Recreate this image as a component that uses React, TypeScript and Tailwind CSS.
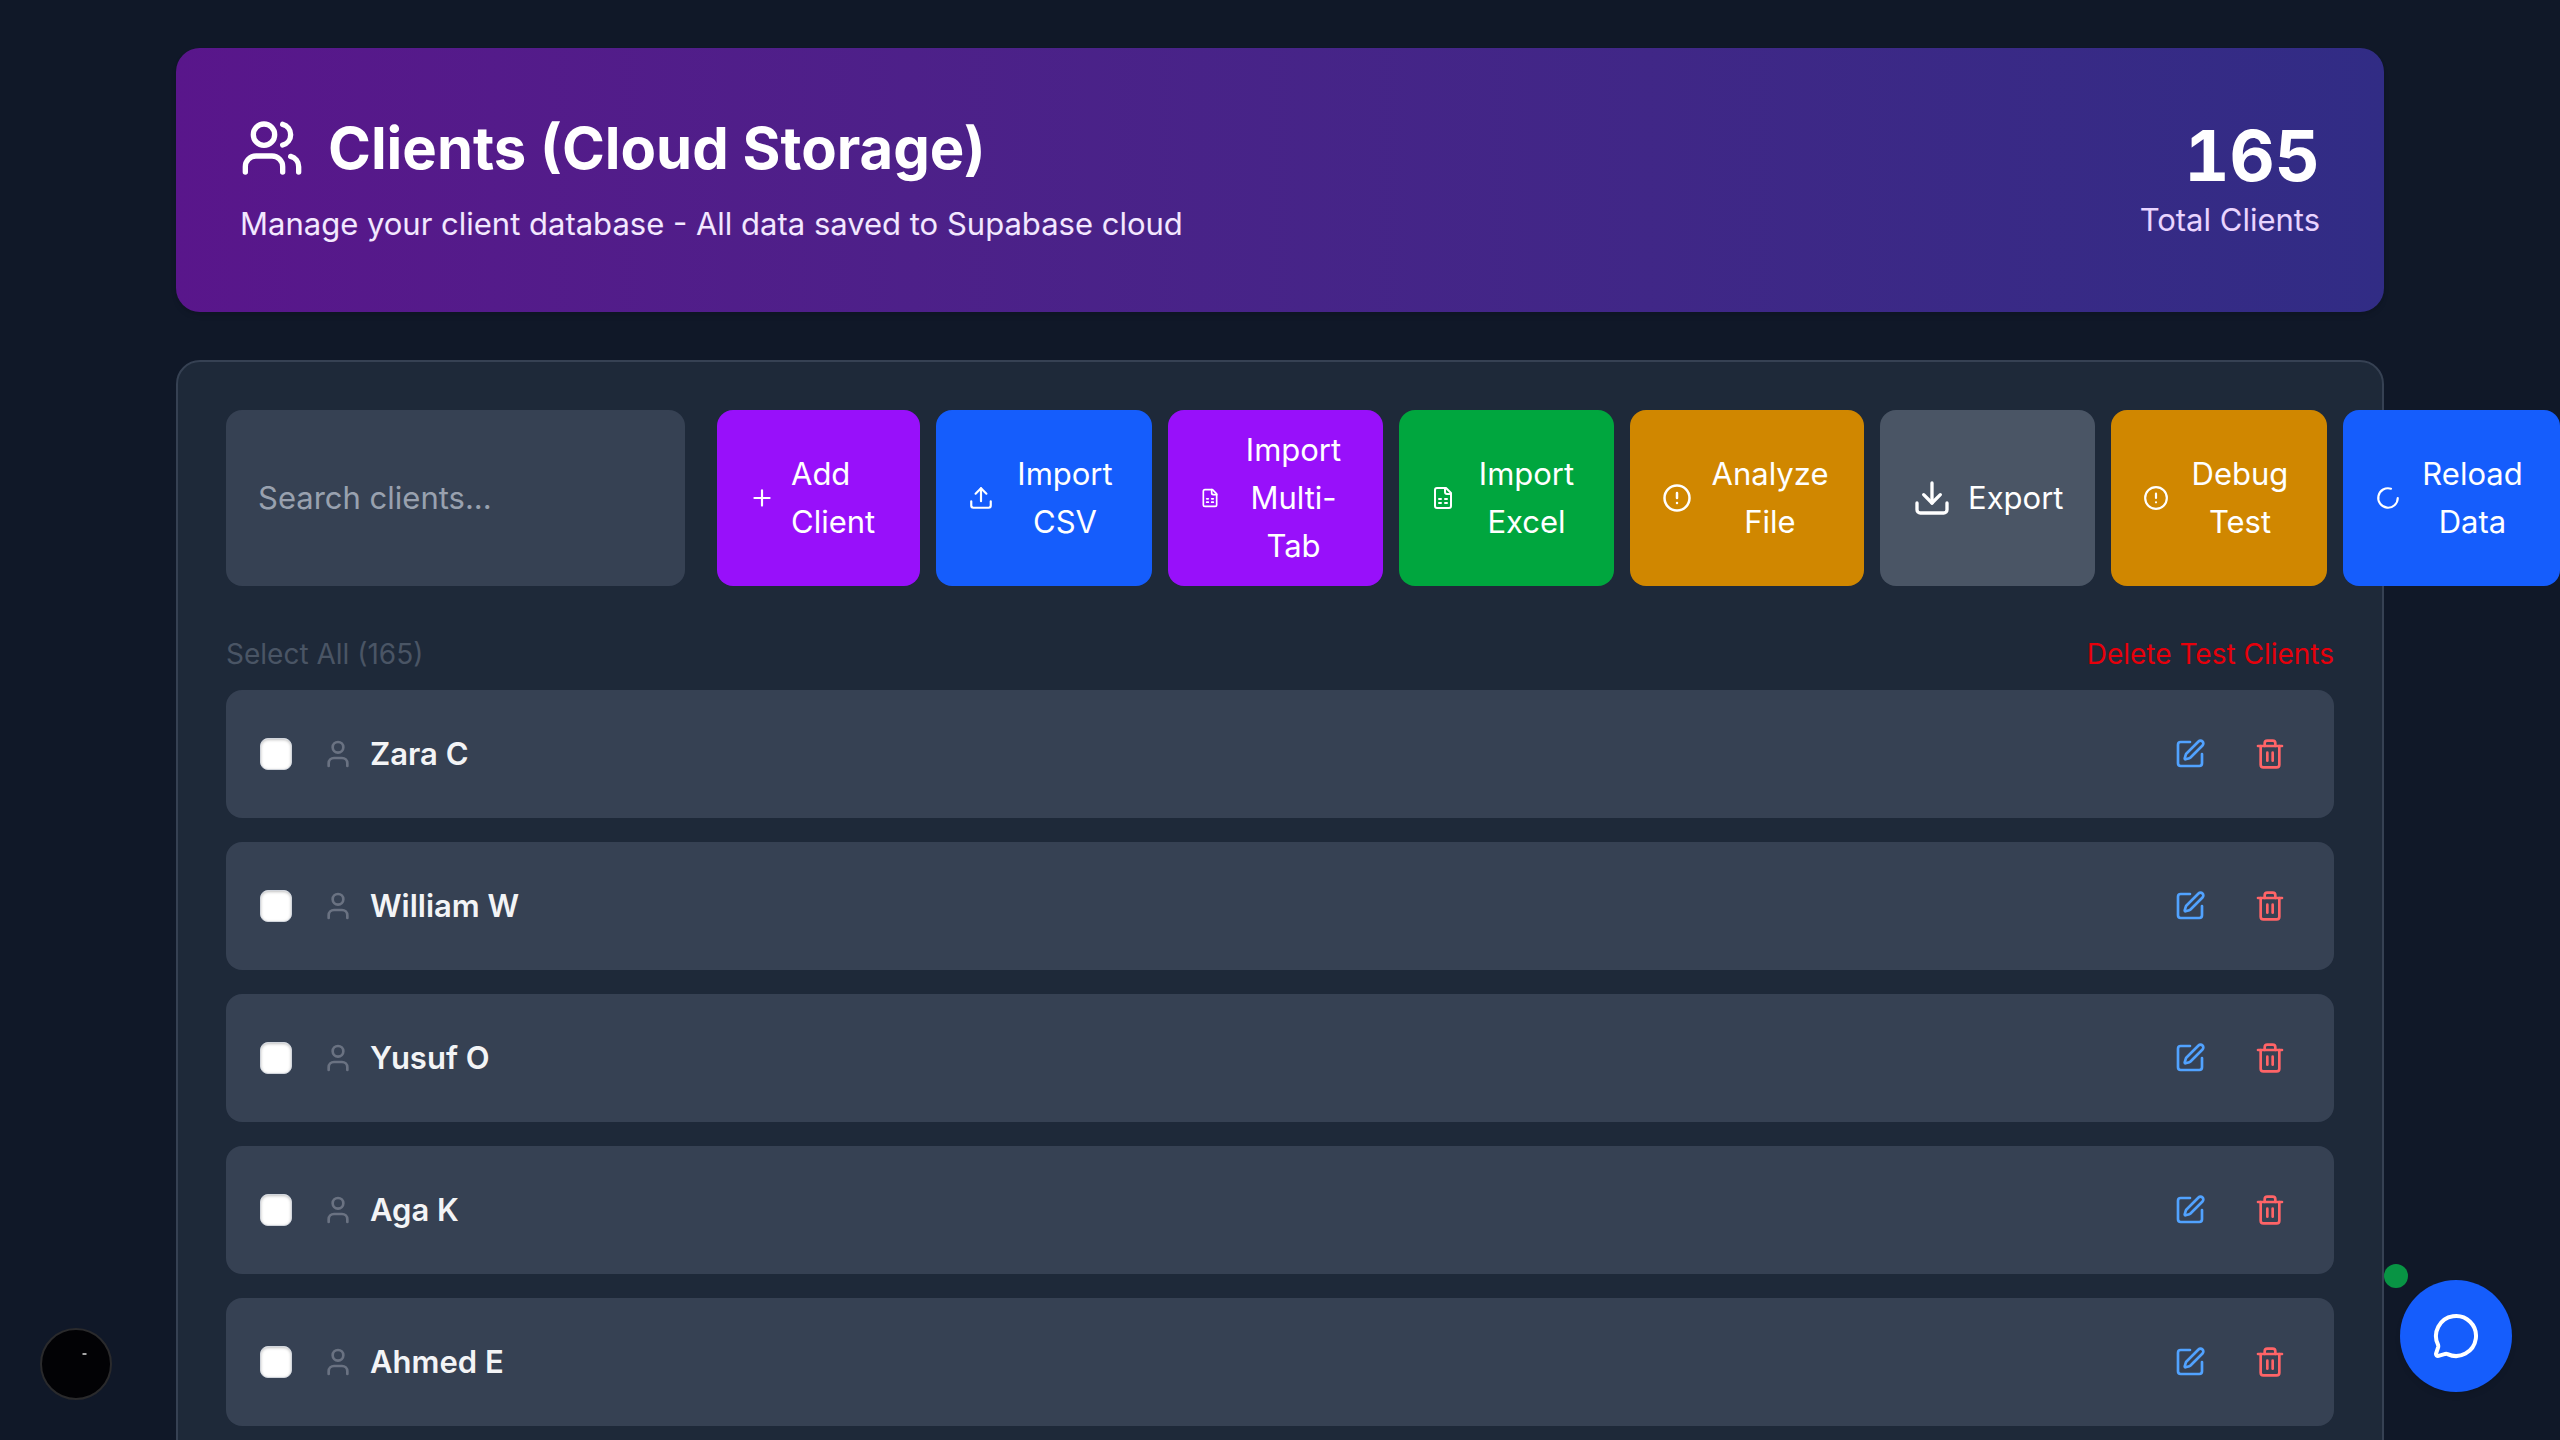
import React from "react";
import {
  CircleAlert,
  Download,
  LoaderCircle,
  MessageCircle,
  Plus,
  SquarePen,
  Trash2,
  Upload,
  User,
  Users,
} from "lucide-react";

type IconProps = { className?: string };

function SheetIcon({ className }: IconProps) {
  return (
    <svg
      viewBox="0 0 24 24"
      fill="none"
      stroke="currentColor"
      strokeWidth="2"
      strokeLinecap="round"
      strokeLinejoin="round"
      className={className}
      aria-hidden="true"
    >
      <path d="M15 2H6a2 2 0 0 0-2 2v16a2 2 0 0 0 2 2h12a2 2 0 0 0 2-2V7Z" />
      <path d="M14 2v4a2 2 0 0 0 2 2h4" />
      <path d="M8 13h2M14 13h2M8 17h2M14 17h2" />
    </svg>
  );
}

type Action = { label: string; icon: React.ComponentType<IconProps>; box: string; iconBox: string };

const actions: Action[] = [
  { label: "Add Client", icon: Plus, box: "w-[203px] bg-[#9810fa] text-left", iconBox: "size-[26px]" },
  { label: "Import CSV", icon: Upload, box: "w-[216px] bg-[#155dfc]", iconBox: "size-[26px]" },
  { label: "Import Multi-Tab", icon: SheetIcon, box: "w-[215px] bg-[#9810fa]", iconBox: "size-5" },
  { label: "Import Excel", icon: SheetIcon, box: "w-[215px] bg-[#00a63e]", iconBox: "size-6" },
  { label: "Analyze File", icon: CircleAlert, box: "w-[234px] bg-[#d08700]", iconBox: "size-[30px]" },
  { label: "Export", icon: Download, box: "w-[215px] bg-[#4a5565]", iconBox: "size-10" },
  { label: "Debug Test", icon: CircleAlert, box: "w-[216px] bg-[#d08700]", iconBox: "size-[26px]" },
  { label: "Reload Data", icon: LoaderCircle, box: "w-[217px] bg-[#155dfc]", iconBox: "size-[26px]" },
];

const clients = ["Zara C", "William W", "Yusuf O", "Aga K", "Ahmed E"];

function ActionButton({ label, icon: Icon, box, iconBox }: Action) {
  return (
    <button type="button" className={`flex shrink-0 items-center gap-4 rounded-2xl px-8 py-4 text-white ${box}`}>
      <Icon className={`shrink-0 ${iconBox}`} />
      <span className="flex-1">{label}</span>
    </button>
  );
}

function ClientRow({ name }: { name: string }) {
  return (
    <li className="flex items-center justify-between rounded-2xl bg-[#364153] py-8 pr-8 pl-[34px]">
      <label className="flex items-center gap-[30px]">
        <input
          type="checkbox"
          className="size-8 appearance-none rounded-lg border border-gray-300 bg-white shadow-[inset_0_1px_3px_rgba(0,0,0,0.25)]"
        />
        <span className="flex items-center gap-4">
          <User className="size-8 text-[#6a7282]" aria-hidden="true" />
          <span className="font-semibold text-gray-100">{name}</span>
        </span>
      </label>
      <div className="flex items-center gap-4">
        <button type="button" aria-label={`Edit ${name}`} className="p-4 text-[#51a2ff]">
          <SquarePen className="size-8" />
        </button>
        <button type="button" aria-label={`Delete ${name}`} className="p-4 text-[#ff6467]">
          <Trash2 className="size-8" />
        </button>
      </div>
    </li>
  );
}

export default function App() {
  return (
    <div className="h-screen overflow-hidden bg-[#101828] px-[176px] pt-12 font-['Inter',sans-serif] text-[31px] leading-[48px] text-white">
      <header className="flex items-center justify-between rounded-3xl bg-linear-to-r from-[#59168b] to-[#312c85] p-16 shadow-md">
        <div>
          <h1 className="flex items-center gap-6 text-[58px] leading-[72px] font-bold">
            <Users className="size-16" aria-hidden="true" />
            Clients (Cloud Storage)
          </h1>
          <p className="mt-4 text-purple-100">Manage your client database - All data saved to Supabase cloud</p>
        </div>
        <div className="text-right">
          <div className="text-[70px] leading-[80px] font-bold tabular-nums">165</div>
          <div className="text-purple-200">Total Clients</div>
        </div>
      </header>

      <main className="mt-12 rounded-3xl border-2 border-[#364153] bg-[#1e2939] p-12">
        <div className="flex gap-8">
          <input
            type="search"
            aria-label="Search clients"
            placeholder="Search clients..."
            className="w-[459px] shrink-0 rounded-2xl bg-[#364153] px-8 placeholder:text-[#99a1af]"
          />
          <div className="flex gap-4">
            {actions.map((action) => (
              <ActionButton key={action.label} {...action} />
            ))}
          </div>
        </div>

        <div className="mt-12 mb-4 flex justify-between text-[28px] leading-10">
          <button type="button" className="text-[#4a5565]">
            Select All (165)
          </button>
          <button type="button" className="text-[#e7000b]">
            Delete Test Clients
          </button>
        </div>

        <ul className="flex flex-col gap-6">
          {clients.map((name) => (
            <ClientRow key={name} name={name} />
          ))}
        </ul>
      </main>

      <button
        type="button"
        aria-label="Open developer tools"
        className="fixed bottom-10 left-10 flex size-[72px] items-center justify-center rounded-full border-2 border-[#2a2a2c] bg-[#020205]"
      >
        <svg viewBox="0 0 68 68" className="size-full" aria-hidden="true">
          <path d="M40.500 24h4" stroke="#ddd" strokeWidth="1.500" />
        </svg>
      </button>

      <span className="fixed right-[152px] bottom-[152px] size-6 rounded-full bg-[#089444]" />
      <button
        type="button"
        aria-label="Open chat"
        className="fixed right-12 bottom-12 flex size-28 items-center justify-center rounded-full bg-[#155dfc] shadow-md"
      >
        <MessageCircle className="size-12" />
      </button>
    </div>
  );
}
